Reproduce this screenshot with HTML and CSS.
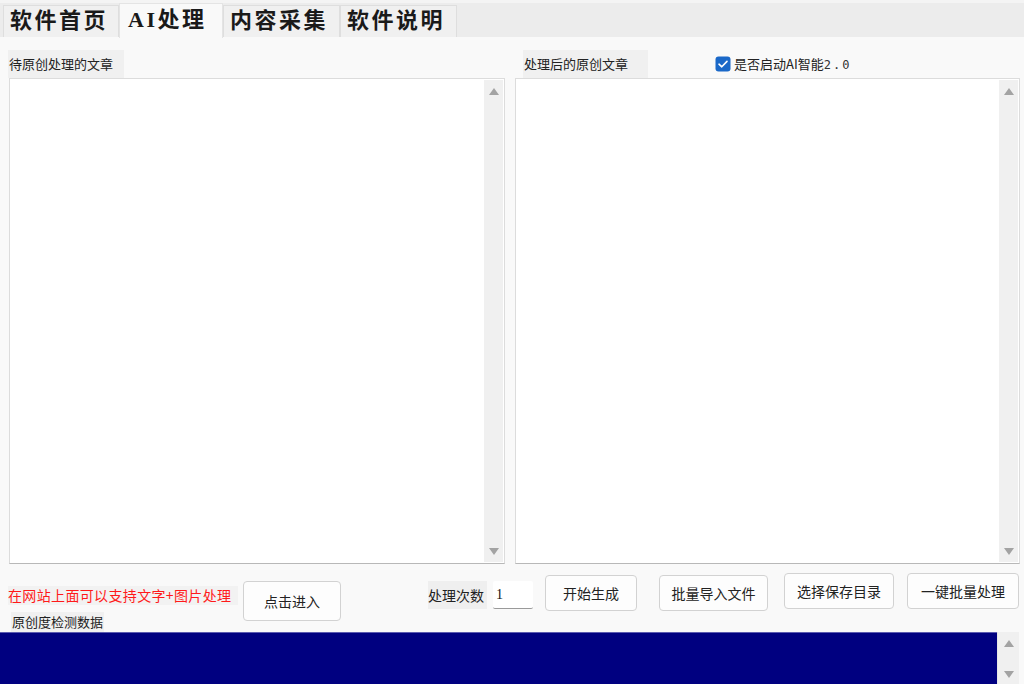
FILE: index.html
```html
<!DOCTYPE html>
<html lang="zh">
<head>
<meta charset="utf-8">
<title>AI处理</title>
<link rel="stylesheet" href="styles.css">
</head>
<body>
<div class="tabs">
  <div class="tab">软件首页</div>
  <div class="tab active">AI处理</div>
  <div class="tab">内容采集</div>
  <div class="tab">软件说明</div>
</div>
<div class="main">
  <div class="panel left">
    <div class="head"><span class="label">待原创处理的文章</span></div>
    <div class="textbox">
      <div class="scroll"><span class="up"></span><span class="down"></span></div>
    </div>
  </div>
  <div class="panel right">
    <div class="head">
      <span class="label">处理后的原创文章</span>
      <span class="check">
        <svg width="16" height="16" viewBox="0 0 16 16"><rect x="0.5" y="0.5" width="15" height="15" rx="3" fill="#1a68c8"/><path d="M4 8.2 L6.8 10.8 L12 5.4" fill="none" stroke="#fff" stroke-width="1.6" stroke-linecap="round" stroke-linejoin="round"/></svg>
        <span>是否启动AI智能<span class="mono">2.0</span></span>
      </span>
    </div>
    <div class="textbox">
      <div class="scroll"><span class="up"></span><span class="down"></span></div>
    </div>
  </div>
</div>
<div class="actions">
  <span class="red">在网站上面可以支持文字+图片处理</span>
  <button class="btn enter">点击进入</button>
  <span class="count-label">处理次数</span>
  <span class="count">1</span>
  <button class="btn gen">开始生成</button>
  <button class="btn imp">批量导入文件</button>
  <button class="btn dir">选择保存目录</button>
  <button class="btn batch">一键批量处理</button>
</div>
<div class="result-label"><span>原创度检测数据</span></div>
<div class="result">
  <div class="navy"></div>
  <div class="scroll small"><span class="up"></span><span class="down"></span></div>
</div>
</body>
</html>
```
FILE: styles.css
```css
html, body {
  margin: 0;
  padding: 0;
}
body {
  width: 1024px;
  height: 684px;
  overflow: hidden;
  background: #f9f9f9;
  font-family: "Noto Sans CJK SC", "Noto Sans", sans-serif;
  color: #222;
  font-size: 13px;
}
.tabs {
  height: 37px;
  box-sizing: border-box;
  border-top: 3px solid #f4f4f4;
  background: #ececec;
  display: flex;
  align-items: flex-end;
  padding-left: 3px;
}
.tab {
  height: 32px;
  box-sizing: border-box;
  border: 1px solid #dedede;
  border-bottom: none;
  background: #f0f0f0;
  font-family: "Liberation Serif", "Noto Sans CJK SC", serif;
  font-weight: 700;
  font-size: 22px;
  letter-spacing: 2.5px;
  line-height: 30px;
  padding: 0 2px 0 6px;
  color: #1a1a1a;
  width: 116px;
}
.tab.active {
  height: 35px;
  width: 104px;
  background: #f9f9f9;
  line-height: 32px;
  border-color: #e4e4e4;
  padding-left: 8px;
  position: relative;
  top: 1px;
}
.tab:nth-child(3) { width: 117px; }
.tab:nth-child(4) { width: 117px; }
.main {
  display: flex;
  gap: 10px;
  padding: 13px 4px 0 9px;
}
.panel { display: flex; flex-direction: column; }
.panel.left { width: 496px; }
.panel.right { width: 505px; }
.head {
  height: 28px;
  display: flex;
  align-items: center;
}
.label {
  background: #f0f0f0;
  height: 28px;
  line-height: 28px;
  padding: 0 1px;
  font-size: 13px;
  color: #222;
}
.left .label { margin-left: -1px; width: 114px; }
.right .label { margin-left: 8px; width: 123px; padding-left: 1px; }
.check {
  display: flex;
  align-items: center;
  gap: 3px;
  margin-left: 67px;
  font-size: 13px;
  color: #222;
  margin-top: -1px;
}
.mono {
  font-family: "DejaVu Sans Mono", monospace;
  font-size: 12px;
  letter-spacing: 2px;
  color: #333;
}
.textbox {
  height: 486px;
  background: #fff;
  border: 1px solid #dcdcdc;
  border-bottom-color: #b8b8b8;
  box-sizing: border-box;
  display: flex;
  justify-content: flex-end;
  padding: 1px;
}
.scroll {
  width: 19px;
  background: #f0f0f0;
  display: flex;
  flex-direction: column;
  justify-content: space-between;
  align-items: center;
  padding: 8px 0 7px;
  box-sizing: border-box;
}
.up, .down {
  width: 0;
  height: 0;
  border-left: 5px solid transparent;
  border-right: 5px solid transparent;
}
.up { border-bottom: 7px solid #a3a3a3; }
.down { border-top: 7px solid #a3a3a3; }
.actions {
  position: relative;
  height: 48px;
  margin-top: 9px;
  display: flex;
  align-items: flex-start;
}
.red {
  margin-left: 8px;
  margin-top: 13px;
  background: #f2f2f2;
  color: #ff1a1a;
  font-size: 14px;
  letter-spacing: 0.35px;
  line-height: 19px;
  height: 19px;
  width: 230px;
}
.btn {
  font-family: "Noto Sans CJK SC", sans-serif;
  font-size: 14px;
  color: #222;
  background: #fdfdfd;
  border: 1px solid #d2d2d2;
  border-radius: 4px;
  box-sizing: border-box;
  height: 36px;
  padding: 0;
}
.enter { margin-left: 5px; margin-top: 8px; width: 98px; height: 40px; }
.count-label {
  margin-left: 87px;
  margin-top: 8px;
  background: #efefef;
  height: 28px;
  line-height: 28px;
  font-size: 14px;
  width: 59px;
}
.count {
  margin-left: 6px;
  margin-top: 8px;
  width: 40px;
  height: 28px;
  box-sizing: border-box;
  background: #fff;
  border-bottom: 1px solid #9a9a9a;
  border-radius: 2px;
  line-height: 28px;
  padding-left: 3px;
  font-family: "Liberation Serif", serif;
  font-size: 14px;
  color: #111;
}
.gen { margin-left: 12px; margin-top: 2px; width: 92px; }
.imp { margin-left: 22px; margin-top: 2px; width: 109px; }
.dir { margin-left: 16px; margin-top: 0; width: 110px; }
.batch { margin-left: 13px; margin-top: 0; width: 112px; }
.result-label {
  height: 20px;
  margin-top: -9px;
  padding-left: 11px;
  position: relative;
}
.result-label span {
  display: inline-block;
  background: #f0f0f0;
  height: 20px;
  line-height: 20px;
  font-size: 13px;
  padding: 0 1px;
}
.result {
  height: 52px;
  display: flex;
}
.navy {
  width: 997px;
  background: #000080;
  border-top: 1px solid #5b5bb0;
}
.scroll.small {
  width: 22px;
  padding: 8px 0 6px;
  background: #f0f0f0;
  border-left: 1px solid #e6e6e6;
}
```
